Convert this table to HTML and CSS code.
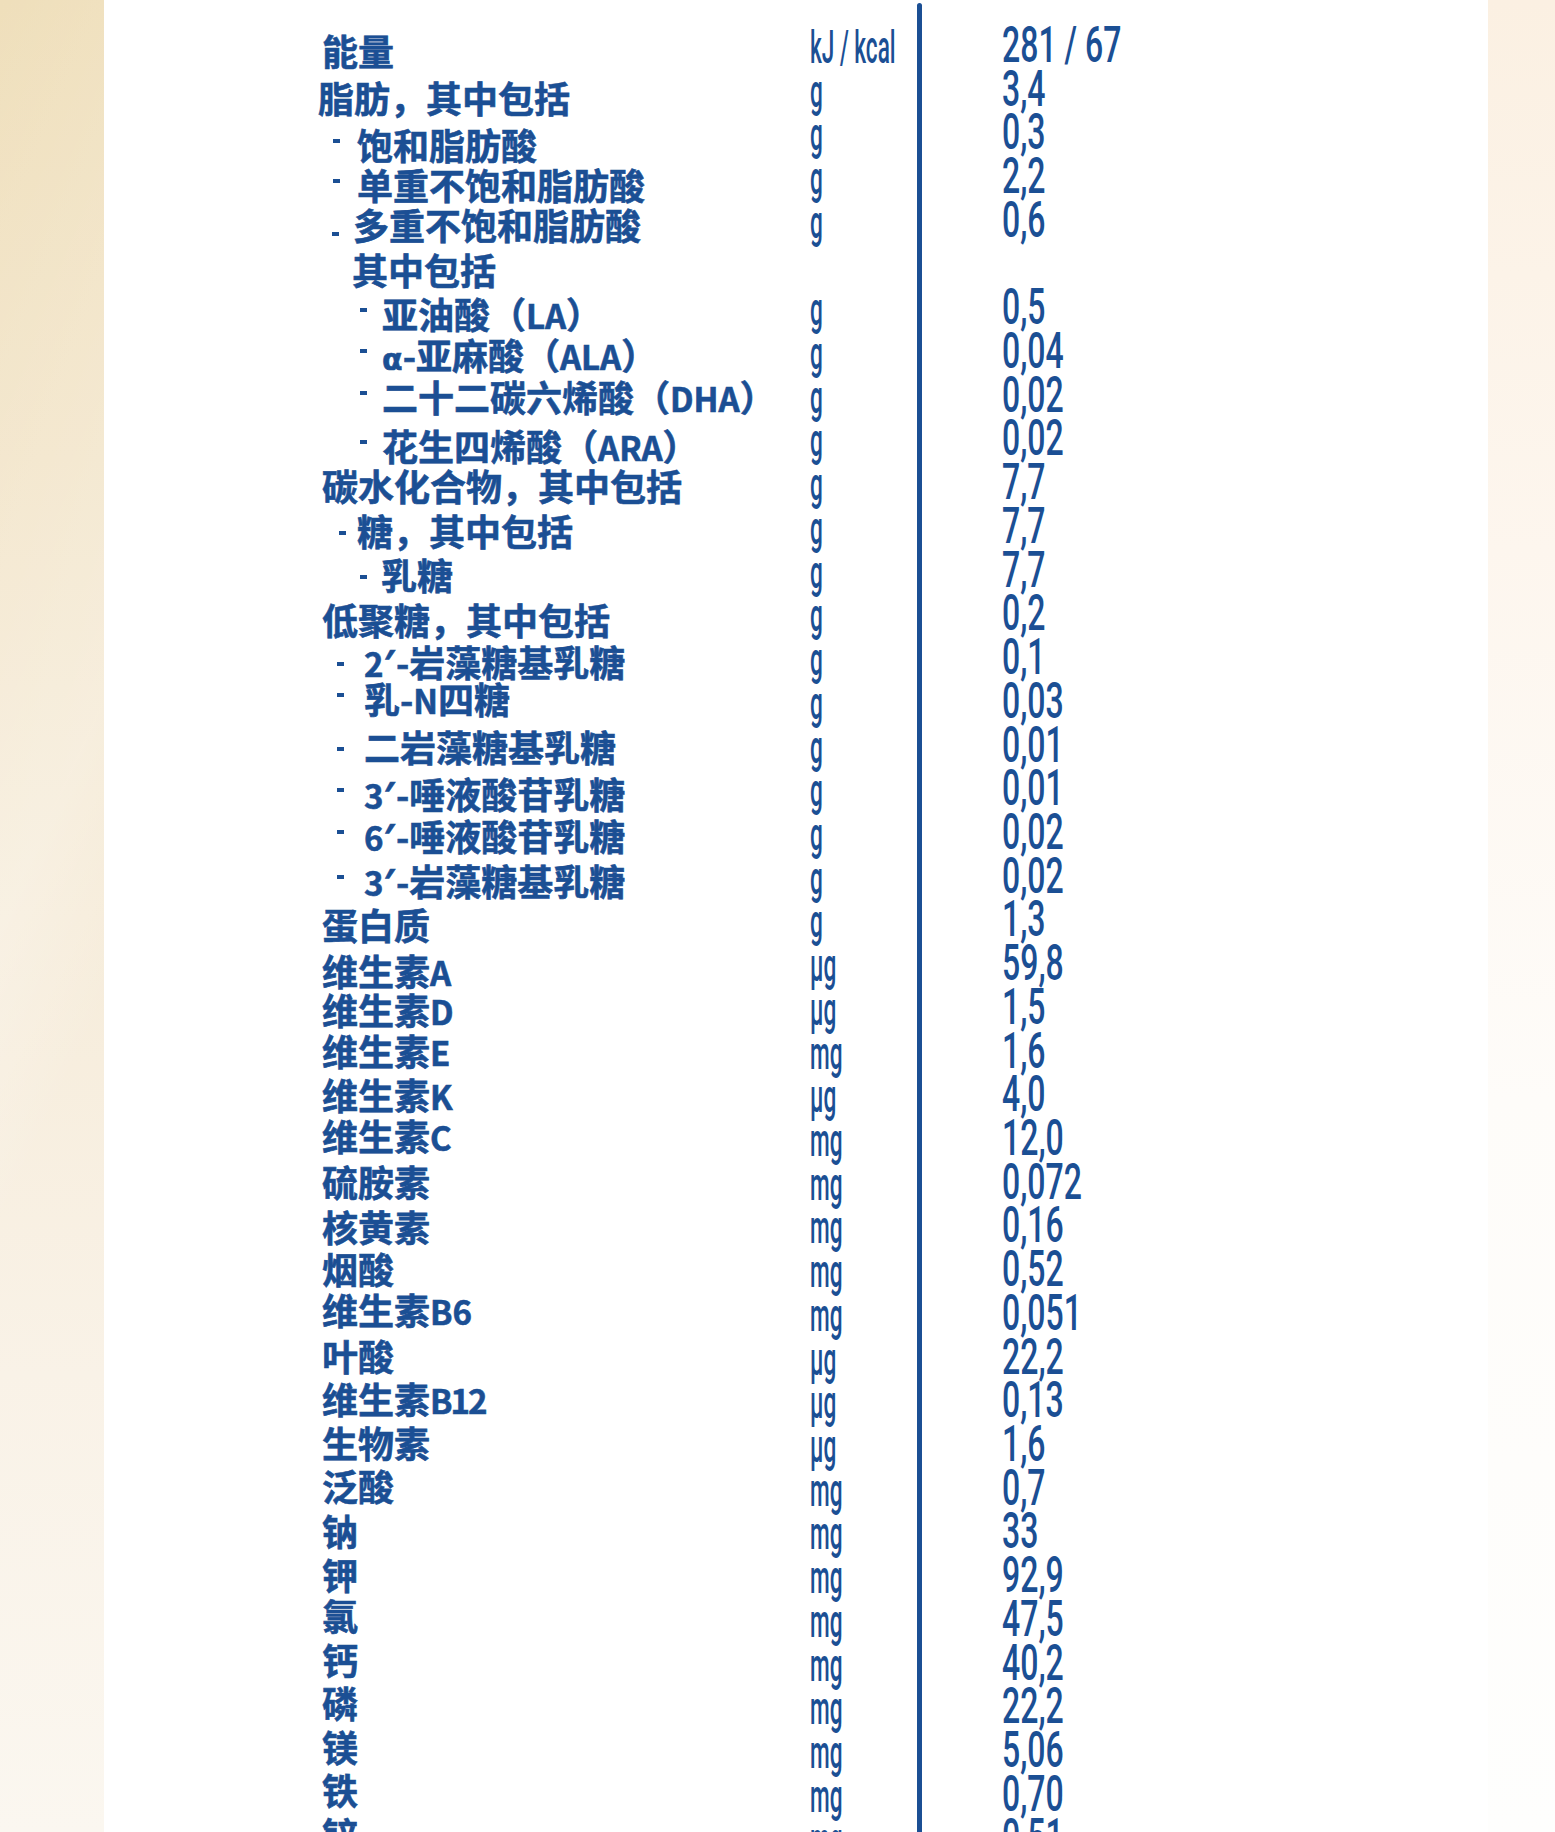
FILE: index.html
```html
<!DOCTYPE html>
<html lang="zh-CN">
<head>
<meta charset="utf-8">
<title>营养成分表</title>
<link rel="stylesheet" href="styles.css">
</head>
<body>
<div class="edge-left"></div>
<main class="panel">
  <div class="labels">
    <div class="lab">能量</div>
    <div class="lab out d4">脂肪，其中包括</div>
    <div class="lab i1 d7"><i class="dash hi"></i>饱和脂肪酸</div>
    <div class="lab i1 d4"><i class="dash hi"></i>单重不饱和脂肪酸</div>
    <div class="lab i1b"><i class="dash lo"></i>多重不饱和脂肪酸</div>
    <div class="lab sub d2">其中包括</div>
    <div class="lab i2 d2"><i class="dash hi"></i>亚油酸（<span class="lat">LA</span>）</div>
    <div class="lab i2"><i class="dash hi"></i><span class="gr">α</span>-亚麻酸（<span class="lat">ALA</span>）</div>
    <div class="lab i2 u2"><i class="dash hi"></i>二十二碳六烯酸（<span class="lat">DHA</span>）</div>
    <div class="lab i2 d4"><i class="dash hi"></i>花生四烯酸（<span class="lat">ARA</span>）</div>
    <div class="lab">碳水化合物，其中包括</div>
    <div class="lab i1c d2"><i class="dash"></i>糖，其中包括</div>
    <div class="lab i2c d2"><i class="dash"></i>乳糖</div>
    <div class="lab d4">低聚糖，其中包括</div>
    <div class="lab io d2"><i class="dash"></i><span class="lat">2</span><span class="pr">′</span>-岩藻糖基乳糖</div>
    <div class="lab io u4"><i class="dash hi"></i>乳-<span class="lat">N</span>四糖</div>
    <div class="lab io"><i class="dash"></i>二岩藻糖基乳糖</div>
    <div class="lab io d4"><i class="dash hi"></i><span class="lat">3</span><span class="pr">′</span>-唾液酸苷乳糖</div>
    <div class="lab io d2"><i class="dash hi"></i><span class="lat">6</span><span class="pr">′</span>-唾液酸苷乳糖</div>
    <div class="lab io d4"><i class="dash hi"></i><span class="lat">3</span><span class="pr">′</span>-岩藻糖基乳糖</div>
    <div class="lab d4">蛋白质</div>
    <div class="lab d7">维生素<span class="lat">A</span></div>
    <div class="lab d2">维生素<span class="lat">D</span></div>
    <div class="lab">维生素<span class="lat">E</span></div>
    <div class="lab">维生素<span class="lat">K</span></div>
    <div class="lab u2">维生素<span class="lat">C</span></div>
    <div class="lab">硫胺素</div>
    <div class="lab d2">核黄素</div>
    <div class="lab">烟酸</div>
    <div class="lab u2">维生素<span class="lat">B6</span></div>
    <div class="lab">叶酸</div>
    <div class="lab">维生素<span class="lat nb">B12</span></div>
    <div class="lab">生物素</div>
    <div class="lab">泛酸</div>
    <div class="lab d2">钠</div>
    <div class="lab d2">钾</div>
    <div class="lab">氯</div>
    <div class="lab">钙</div>
    <div class="lab">磷</div>
    <div class="lab">镁</div>
    <div class="lab">铁</div>
    <div class="lab">锌</div>
  </div>
  <div class="units">
    <div class="u">kJ / kcal</div>
    <div class="u">g</div>
    <div class="u">g</div>
    <div class="u">g</div>
    <div class="u">g</div>
    <div class="u"></div>
    <div class="u">g</div>
    <div class="u">g</div>
    <div class="u">g</div>
    <div class="u">g</div>
    <div class="u">g</div>
    <div class="u">g</div>
    <div class="u">g</div>
    <div class="u">g</div>
    <div class="u">g</div>
    <div class="u">g</div>
    <div class="u">g</div>
    <div class="u">g</div>
    <div class="u">g</div>
    <div class="u">g</div>
    <div class="u">g</div>
    <div class="u">µg</div>
    <div class="u">µg</div>
    <div class="u">mg</div>
    <div class="u">µg</div>
    <div class="u">mg</div>
    <div class="u">mg</div>
    <div class="u">mg</div>
    <div class="u">mg</div>
    <div class="u">mg</div>
    <div class="u">µg</div>
    <div class="u">µg</div>
    <div class="u">µg</div>
    <div class="u">mg</div>
    <div class="u">mg</div>
    <div class="u">mg</div>
    <div class="u">mg</div>
    <div class="u">mg</div>
    <div class="u">mg</div>
    <div class="u">mg</div>
    <div class="u">mg</div>
    <div class="u">mg</div>
  </div>
  <div class="divider"></div>
  <div class="values">
    <div class="v">281 / 67</div>
    <div class="v">3,4</div>
    <div class="v">0,3</div>
    <div class="v">2,2</div>
    <div class="v">0,6</div>
    <div class="v"></div>
    <div class="v">0,5</div>
    <div class="v">0,04</div>
    <div class="v">0,02</div>
    <div class="v">0,02</div>
    <div class="v">7,7</div>
    <div class="v">7,7</div>
    <div class="v">7,7</div>
    <div class="v">0,2</div>
    <div class="v">0,1</div>
    <div class="v">0,03</div>
    <div class="v">0,01</div>
    <div class="v">0,01</div>
    <div class="v">0,02</div>
    <div class="v">0,02</div>
    <div class="v">1,3</div>
    <div class="v">59,8</div>
    <div class="v">1,5</div>
    <div class="v">1,6</div>
    <div class="v">4,0</div>
    <div class="v">12,0</div>
    <div class="v">0,072</div>
    <div class="v">0,16</div>
    <div class="v">0,52</div>
    <div class="v">0,051</div>
    <div class="v">22,2</div>
    <div class="v">0,13</div>
    <div class="v">1,6</div>
    <div class="v">0,7</div>
    <div class="v">33</div>
    <div class="v">92,9</div>
    <div class="v">47,5</div>
    <div class="v">40,2</div>
    <div class="v">22,2</div>
    <div class="v">5,06</div>
    <div class="v">0,70</div>
    <div class="v">0,51</div>
  </div>
</main>
<div class="edge-right"></div>
</body>
</html>
```

FILE: styles.css
```css
* { box-sizing: border-box; }
html, body { margin: 0; padding: 0; }
body {
  width: 1555px;
  height: 1832px;
  overflow: hidden;
  display: flex;
  background: #ffffff;
  color: #1b4f94;
}
.edge-left {
  width: 104px;
  flex: none;
  background:
    linear-gradient(115deg, rgba(255,255,255,0) 0%, rgba(255,255,255,0.25) 45%, rgba(255,255,255,0) 60%),
    linear-gradient(180deg, #efdfbb 0%, #f2e4c8 25%, #f6ecda 50%, #f9f2e7 75%, #fbf7f0 100%);
}
.edge-right {
  width: 67px;
  flex: none;
  background: linear-gradient(180deg, #fbf0e2 0%, #fdf6ee 30%, #fefcf9 60%, #fefefd 100%);
}
.panel {
  flex: none;
  width: 1384px;
  height: 1832px;
  background: #ffffff;
  display: flex;
  padding-left: 218px;
}
.labels {
  width: 488px;
  flex: none;
  padding-top: 29px;
  font-family: "Noto Sans CJK SC", "Noto Sans", sans-serif;
  font-weight: 700;
  font-size: 36px;
  -webkit-text-stroke: 0.6px currentColor;
}
.lab {
  height: 43.49px;
  line-height: 43.49px;
  white-space: nowrap;
}
/* small vertical corrections of individual printed lines */
.d2 { padding-top: 2px; }
.d4 { padding-top: 4px; }
.d7 { padding-top: 7px; }
.u2 { margin-top: -2px; margin-bottom: 2px; }
.u4 { margin-top: -4px; margin-bottom: 4px; }
.out { margin-left: -4px; }

.lat { font-size: 33px; }
.lat.nb { letter-spacing: -2px; }
.gr { font-family: "DejaVu Sans", sans-serif; font-size: 30px; }
.pr {
  font-family: "Noto Sans", "DejaVu Sans", sans-serif;
  font-size: 38px;
  font-weight: 700;
  margin-right: 1px;
}
.dash {
  display: inline-block;
  width: 7px;
  height: 4px;
  background: currentColor;
  vertical-align: 11px;
}
.dash.hi { vertical-align: 17px; }
.dash.lo { vertical-align: 4px; }
.i1 { padding-left: 11px; }
.i1 .dash { margin-right: 17px; }
.i1b { padding-left: 10px; }
.i1b .dash { margin-right: 14px; }
.sub { padding-left: 30px; }
.i2 { padding-left: 38px; }
.i2 .dash { margin-right: 15px; }
.i1c { padding-left: 17px; }
.i1c .dash { margin-right: 11px; }
.i2c { padding-left: 38px; }
.i2c .dash { margin-right: 14px; }
.io { padding-left: 15px; }
.io .dash { margin-right: 20px; }

.units {
  width: 107px;
  flex: none;
  padding-top: 25px;
  font-family: Roboto, "Liberation Sans", sans-serif;
  font-weight: 500;
  font-size: 47px;
}
.u {
  height: 43.725px;
  line-height: 43.725px;
  white-space: nowrap;
  transform: scaleX(0.48);
  transform-origin: 0 50%;
}
.divider {
  width: 5px;
  flex: none;
  margin-top: 3px;
  background: currentColor;
  border-radius: 3px 3px 0 0;
}
.values {
  flex: 1;
  padding-left: 80px;
  padding-top: 24px;
  font-family: Roboto, "Liberation Sans", sans-serif;
  font-weight: 500;
  font-size: 50px;
}
.v {
  height: 43.725px;
  line-height: 43.725px;
  white-space: nowrap;
  transform: scaleX(0.64);
  transform-origin: 0 50%;
}
```
